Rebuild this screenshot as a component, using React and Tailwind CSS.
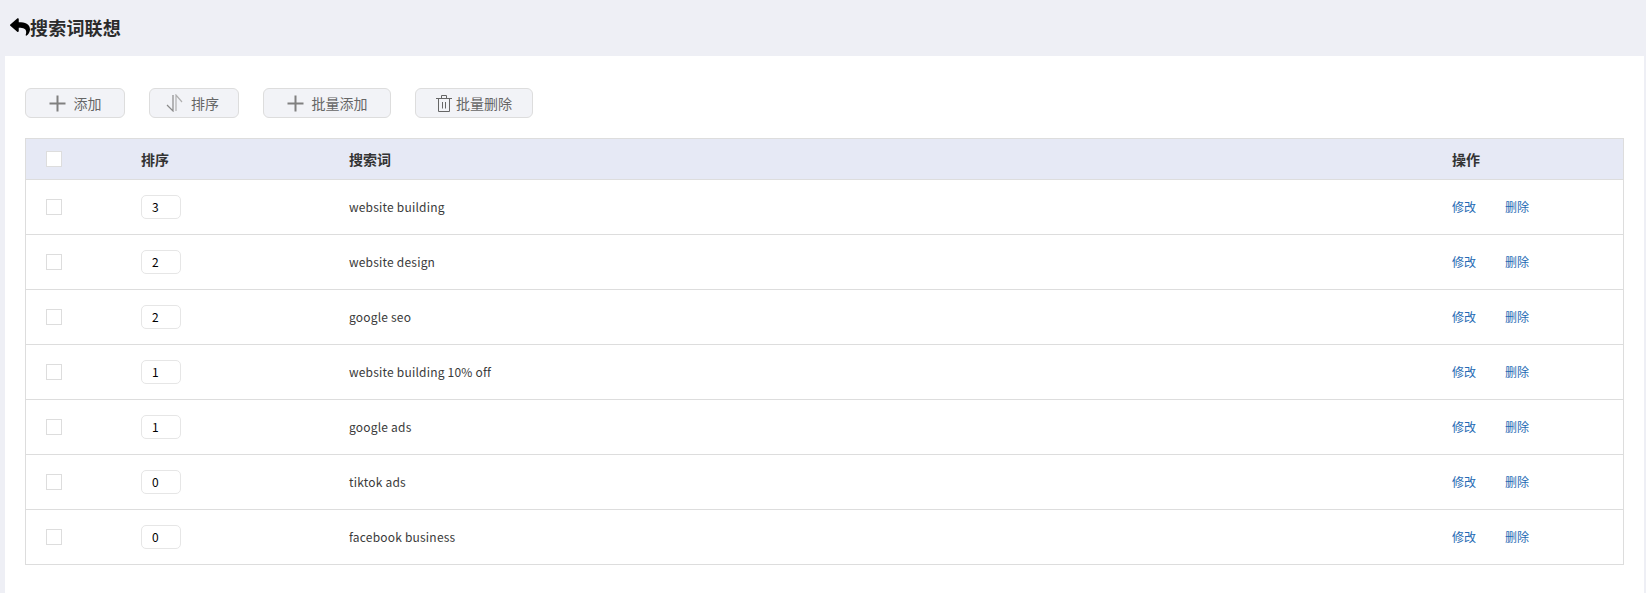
import { FaReply } from "react-icons/fa";

const rows = [
  { sort: 3, word: "website building" },
  { sort: 2, word: "website design" },
  { sort: 2, word: "google seo" },
  { sort: 1, word: "website building 10% off" },
  { sort: 1, word: "google ads" },
  { sort: 0, word: "tiktok ads" },
  { sort: 0, word: "facebook business" },
];

const PlusIcon = () => (
  <svg width="17" height="17" viewBox="0 0 17 17" fill="none" stroke="#808080" strokeWidth="2">
    <path d="M8.5 0.5v16M0.5 8.5h16" />
  </svg>
);

const SortIcon = () => (
  <svg width="17" height="18" viewBox="0 0 17 18" fill="none" stroke="#8a8a8a" strokeWidth="1.2">
    <path d="M7 1v16L1 11" />
    <path d="M10 17V1l6 7" stroke="#b0b0b0" />
  </svg>
);

const TrashIcon = () => (
  <svg width="16" height="17" viewBox="0 0 16 17" fill="none" stroke="#666" strokeWidth="1">
    <path d="M0 3.5h16M5.5 3.5V0.5h5v3M2.5 3.5v13h11v-13M6.5 7v6.5M9.5 7v6.5" />
  </svg>
);

const ToolButton = ({ icon, label, className, gap }) => (
  <button className={`flex h-[30px] items-center justify-center rounded-[6px] border border-[#dddddd] bg-[#f2f3f7] text-sm text-[#666666] ${gap} ${className}`}>
    {icon}
    <span>{label}</span>
  </button>
);

function App() {
  return (
    <div className="h-[593px] overflow-hidden bg-[#eeeff5] font-['Noto_Sans_CJK_SC','Microsoft_YaHei',sans-serif] text-xs text-[#333333]">
      {/* Header */}
      <div className="flex h-14 items-center pb-[3px] pl-[10px]">
        <FaReply className="h-[20px] w-[20px] text-black" />
        <h1 className="text-lg leading-none font-bold tracking-[0.2px] text-[#2b2b2b]">搜索词联想</h1>
      </div>

      {/* Main Content */}
      <div className="mr-[2px] ml-[5px] h-[537px] bg-white px-[20px] pt-8">
        <div className="flex gap-6">
          <ToolButton icon={<PlusIcon />} label="添加" className="w-[100px]" gap="gap-2" />
          <ToolButton icon={<SortIcon />} label="排序" className="w-[90px] pr-[3px]" gap="gap-2" />
          <ToolButton icon={<PlusIcon />} label="批量添加" className="w-[128px]" gap="gap-2" />
          <ToolButton icon={<TrashIcon />} label="批量删除" className="w-[118px]" gap="gap-1" />
        </div>

        <div className="mt-5 w-[1599px] border border-[#dddddd]">
          <div className="flex h-[40px] items-center bg-[#e6e9f5] text-sm font-bold text-[#333333]">
            <div className="w-[115px] pl-5">
              <div className="h-4 w-4 border border-[#dddddd] bg-white"></div>
            </div>
            <div className="w-[208px]">排序</div>
            <div className="flex-1">搜索词</div>
            <div className="w-[171px]">操作</div>
          </div>
          {rows.map((row, i) => (
            <div key={i} className="flex h-[55px] items-center border-t border-[#dddddd] first:h-[54px] first:border-t-0">
              <div className="w-[115px] pl-5">
                <div className="h-4 w-4 border border-[#dddddd] bg-white"></div>
              </div>
              <div className="w-[208px]">
                <input
                  readOnly
                  value={row.sort}
                  className="mb-px block h-6 w-10 rounded-[5px] border border-[#e6e6e6] pl-[10px] text-black outline-none"
                />
              </div>
              <div className="flex-1 tracking-[0.2px] text-[#3a3a3a]">{row.word}</div>
              <div className="flex w-[171px] gap-[29px] text-[#2469b3]">
                <a>修改</a>
                <a>删除</a>
              </div>
            </div>
          ))}
        </div>
      </div>
    </div>
  );
}

export default App;
